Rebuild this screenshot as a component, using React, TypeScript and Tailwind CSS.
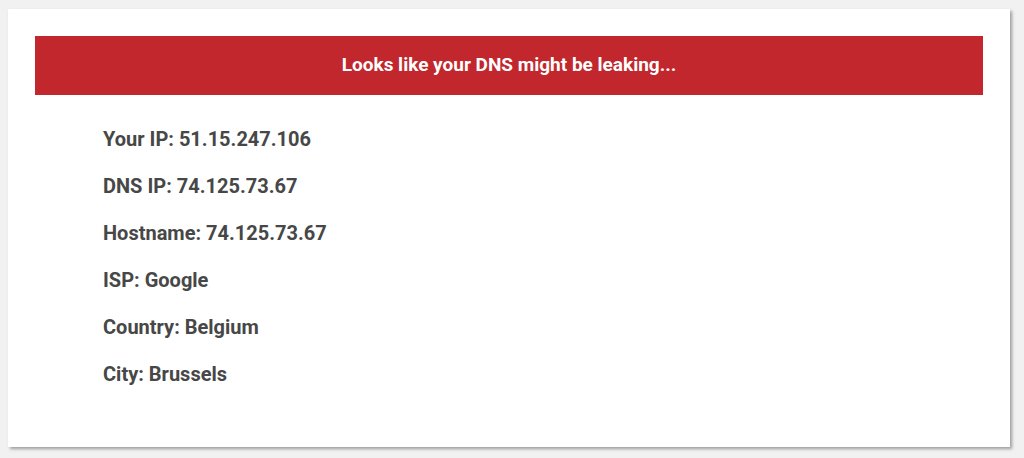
const rows = [
  { label: 'Your IP', value: '51.15.247.106' },
  { label: 'DNS IP', value: '74.125.73.67' },
  { label: 'Hostname', value: '74.125.73.67' },
  { label: 'ISP', value: 'Google' },
  { label: 'Country', value: 'Belgium' },
  { label: 'City', value: 'Brussels' },
]

export default function App() {
  return (
    <div className="min-h-[458px] w-[1024px] bg-[#f1f1f1] pt-[9px] pl-[8px] font-['Roboto',sans-serif]">
      <div className="w-[1002px] h-[438px] bg-white shadow-[2px_2px_3px_rgba(0,0,0,0.35)] px-[27px] pt-[27px]">
        <div className="h-[59px] bg-[#c1272d] flex items-center justify-center">
          <span className="text-white font-bold text-[19px]">Looks like your DNS might be leaking...</span>
        </div>
        <div className="pl-[68px] pt-[32px] flex flex-col gap-[23px]">
          {rows.map((r) => (
            <div key={r.label} className="text-[#474747] font-bold text-[20px] leading-[24px]">
              {r.label}: {r.value}
            </div>
          ))}
        </div>
      </div>
    </div>
  )
}
